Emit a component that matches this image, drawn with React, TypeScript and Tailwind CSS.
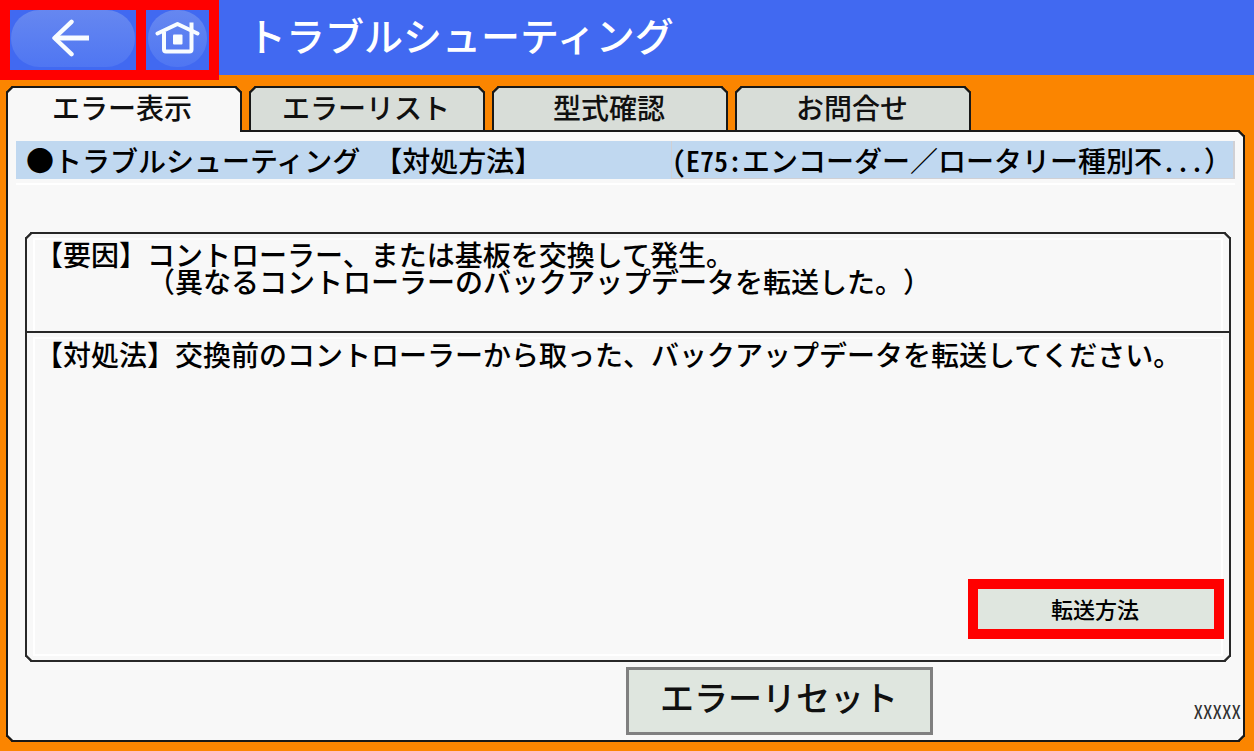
import { useState } from "react";

const TABS = ["エラー表示", "エラーリスト", "型式確認", "お問合せ"];

function BackIcon() {
  return (
    <svg
      width="40"
      height="40"
      viewBox="0 0 40 40"
      fill="none"
      stroke="#f8fcff"
      strokeWidth="4.4"
      strokeLinecap="round"
      strokeLinejoin="round"
      aria-hidden="true"
    >
      <path d="M20.5 2.8L3.5 19l17 16.2" />
      <path d="M3.5 19h34.5" strokeWidth="5" strokeLinecap="butt" />
    </svg>
  );
}

function HomeIcon() {
  return (
    <svg
      width="46"
      height="36"
      viewBox="0 0 46 36"
      fill="none"
      stroke="#f8fcff"
      strokeWidth="4"
      aria-hidden="true"
    >
      <path d="M2.5 12.5L22.5 3l20 9.5" strokeLinecap="round" strokeLinejoin="round" />
      <path d="M36.5 1.5v9" />
      <path d="M9 11v17.5q0 2 2 2h23.5q2 0 2-2V11" />
      <rect x="18" y="13.5" width="9.5" height="10" rx="1" fill="#f8fcff" stroke="none" />
    </svg>
  );
}

function Header() {
  return (
    <header className="flex h-[75px] items-start bg-[#4169f1]">
      <nav className="flex h-20 shrink-0 gap-2.5 bg-[#ff0000] p-2.5">
        <button
          type="button"
          aria-label="戻る"
          className="flex w-[126px] bg-[#4169f1] px-px pb-[3px]"
        >
          <span className="flex h-full w-full items-center justify-center rounded-full bg-linear-to-b from-[#6687f0] to-[#4f76f2] pr-1">
            <BackIcon />
          </span>
        </button>
        <button
          type="button"
          aria-label="ホーム"
          className="flex w-[63px] bg-[#4169f1] px-0.5 pb-[3px]"
        >
          <span className="flex h-full w-full items-center justify-center rounded-full bg-linear-to-b from-[#6687f0] to-[#4f76f2]">
            <HomeIcon />
          </span>
        </button>
      </nav>
      <h1 className="self-center pb-1.5 pl-7 text-[39px] leading-none font-medium whitespace-nowrap text-white">
        トラブルシューティング
      </h1>
    </header>
  );
}

function Tabs({ active, onSelect }: { active: number; onSelect: (i: number) => void }) {
  return (
    <div role="tablist" className="flex h-11 items-start gap-[7px]">
      {TABS.map((label, i) => (
        <button
          key={label}
          type="button"
          role="tab"
          aria-selected={i === active}
          onClick={() => onSelect(i)}
          className={
            i === active
              ? "relative h-[46px] w-[236px] rounded-t-[6px] border-2 border-b-0 border-[#181818] bg-[#f8f8f8] pr-1 pb-1.5 text-[28px] leading-none font-medium text-[#101010] [corner-shape:bevel]"
              : "h-11 w-[236px] rounded-t-[6px] border-2 border-b-0 border-[#181818] bg-[#d8ddd8] pr-0.5 pb-1 text-[28px] leading-none font-medium text-[#101010] [corner-shape:bevel]"
          }
        >
          {label}
        </button>
      ))}
    </div>
  );
}

function ErrorTitle() {
  return (
    <div className="mx-2 border-b-2 border-white pb-1">
      <div className="flex h-[38px] items-center bg-[#c0d8f0] text-[28px] leading-none font-medium whitespace-nowrap">
        <h2 className="flex-1 pl-2.5 [text-spacing-trim:normal]">
          ●トラブルシューティング　【対処方法】
        </h2>
        <p className="flex h-full w-[564px] items-center border-r-2 border-b border-l border-[#d0d0d4]">
          <span className="[font-feature-settings:'hwid']">(E75:</span>
          エンコーダー／ロータリー種別不
          <span className="[font-feature-settings:'hwid']">...</span>）
        </p>
      </div>
    </div>
  );
}

export default function App() {
  const [active, setActive] = useState(0);

  return (
    <div
      lang="ja"
      className="flex min-h-screen flex-col bg-[#fb8500] font-['Noto_Sans_CJK_JP',sans-serif] text-black [text-spacing-trim:space-all]"
    >
      <Header />
      <main className="flex flex-1 flex-col pt-[11px] pr-[9px] pb-[9px] pl-1.5">
        <Tabs active={active} onSelect={setActive} />
        <section className="flex flex-1 flex-col rounded-[6px] rounded-tl-none border-2 border-[#181818] bg-[#f8f8f8] pt-[9px] [corner-shape:bevel]">
          <ErrorTitle />

          <div className="mx-[17px] mt-[47px] mr-3 flex flex-1 flex-col rounded-[6px] border-2 border-[#282828] text-[28px] leading-[27px] font-medium [corner-shape:bevel]">
            <div className="h-[97px] px-1.5 pt-1">
              <p className="h-full border-2 border-b-0 border-white pt-px whitespace-pre">
                {"【要因】コントローラー、または基板を交換して発生。\n　　　　（異なるコントローラーのバックアップデータを転送した。）"}
              </p>
            </div>
            <div className="flex flex-1 flex-col border-t-2 border-[#282828] px-1.5 pt-1 pb-1">
              <div className="flex flex-1 flex-col border-2 border-white pt-0.5">
                <p>
                  【対処法】交換前のコントローラーから取った、バックアップデータを転送してください。
                </p>
                <button
                  type="button"
                  className="mt-auto -mr-[3px] mb-[15px] h-[60px] w-64 self-end border-10 border-[#ff0000] bg-[#dfe6df] pr-0.5 pb-0.5 text-[22px] leading-none font-medium"
                >
                  転送方法
                </button>
              </div>
            </div>
          </div>

          <footer className="flex items-end justify-between pt-[5px] pb-[5px]">
            <button
              type="button"
              className="ml-[50%] h-[68px] w-[307px] border-3 border-[#808080] bg-[#dfe6df] pb-2 text-[34px] leading-none font-medium text-[#101010]"
            >
              エラーリセット
            </button>
            <span className="pr-0.5 pb-3 text-[19px] leading-6 text-[#303030] [font-feature-settings:'hwid']">
              XXXXX
            </span>
          </footer>
        </section>
      </main>
    </div>
  );
}
